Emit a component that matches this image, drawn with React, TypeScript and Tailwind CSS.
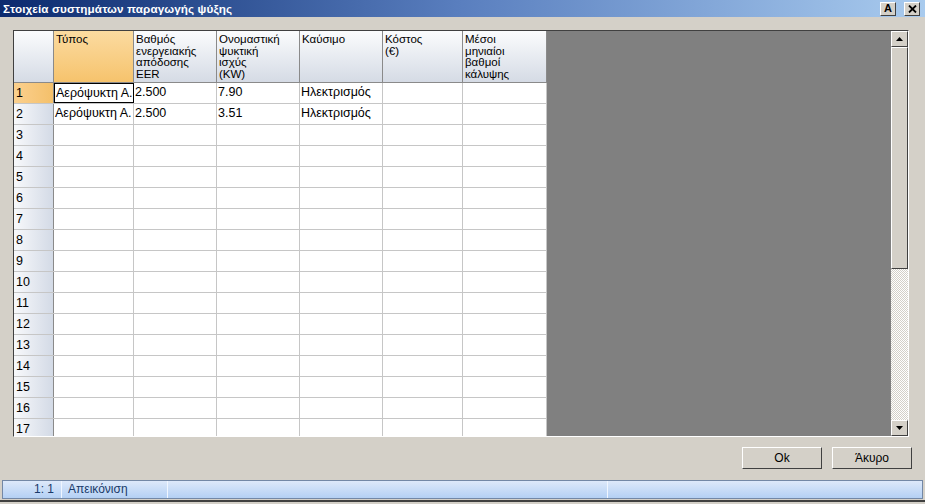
import React from "react";

const cols = [
  { w: 80, label: ["Τύπος"], sel: true },
  { w: 83, label: ["Βαθμός", "ενεργειακής", "απόδοσης", "EER"] },
  { w: 83, label: ["Ονομαστική", "ψυκτική", "ισχύς", "(KW)"] },
  { w: 83, label: ["Καύσιμο"] },
  { w: 80, label: ["Κόστος", "(€)"] },
  { w: 84, label: ["Μέσοι", "μηνιαίοι", "βαθμοί", "κάλυψης"] },
];

const data: string[][] = [
  ["Αερόψυκτη Α.", "2.500", "7.90", "Ηλεκτρισμός", "", ""],
  ["Αερόψυκτη Α.", "2.500", "3.51", "Ηλεκτρισμός", "", ""],
];

export default function App() {
  const rows = Array.from({ length: 17 }, (_, i) => i + 1);
  return (
    <div
      className="w-[925px] h-[504px] bg-[#d4d0c8] flex flex-col overflow-hidden text-black"
      style={{ fontFamily: '"Liberation Sans", Arial, sans-serif' }}
    >
      {/* Title bar */}
      <div className="h-[17px] flex items-center bg-gradient-to-r from-[#0c2a6e] via-[#5a7fbf] to-[#a9cbee] pl-[3px] pr-[5px]">
        <span className="text-white font-bold text-[11.7px] leading-none flex-1 tracking-[0.1px]">
          Στοιχεία συστημάτων παραγωγής ψύξης
        </span>
        <div className="w-[16px] h-[14px] bg-[#d4d0c8] border border-t-white border-l-white border-r-[#404040] border-b-[#404040] flex items-center justify-center text-[11px] font-bold leading-none mr-[8px]">
          A
        </div>
        <div className="w-[16px] h-[14px] bg-[#d4d0c8] border border-t-white border-l-white border-r-[#404040] border-b-[#404040] flex items-center justify-center">
          <svg width="9" height="8" viewBox="0 0 9 8">
            <path d="M1 0.5 L8 7.5 M8 0.5 L1 7.5" stroke="#000" strokeWidth="1.8" />
          </svg>
        </div>
      </div>

      {/* Grid area */}
      <div className="ml-[13px] mt-[13px] w-[896px] h-[407px] border border-t-[#404040] border-l-[#404040] border-r-[#ffffff] border-b-[#ffffff] flex bg-[#808080]">
        <div className="flex flex-col bg-white h-full overflow-hidden">
          {/* header row */}
          <div className="flex h-[52px] shrink-0 border-b border-[#8a8a8a]">
            <div className="w-[40px] h-full bg-gradient-to-b from-[#fbfcfd] to-[#d5dbe5] border-r border-[#8a8a8a]" />
            {cols.map((c, i) => (
              <div
                key={i}
                style={{ width: c.w }}
                className={
                  "h-full border-r border-[#8a8a8a] pl-[2px] pt-[3px] text-[11.5px] leading-[11.5px] whitespace-nowrap overflow-hidden " +
                  (c.sel
                    ? "bg-gradient-to-b from-[#fbdba0] to-[#f6c36c]"
                    : "bg-gradient-to-b from-[#fbfcfd] to-[#d5dbe5]")
                }
              >
                {c.label.map((l, j) => (
                  <div key={j}>{l}</div>
                ))}
              </div>
            ))}
          </div>
          {rows.map((r) => {
            const d = data[r - 1];
            return (
              <div key={r} className="flex h-[21px] shrink-0 border-b border-[#c6c6c6]">
                <div
                  className={
                    "w-[40px] h-full border-r border-[#8a8a8a] pl-[2px] text-[12.5px] leading-[20px] " +
                    (r === 1
                      ? "bg-gradient-to-r from-[#fbd08e] to-[#f4c06a]"
                      : "bg-gradient-to-r from-[#f8f9fb] to-[#d3dae6]")
                  }
                >
                  {r}
                </div>
                {cols.map((c, i) => (
                  <div
                    key={i}
                    style={{ width: c.w }}
                    className={
                      "h-full text-[12.5px] leading-[19px] whitespace-nowrap overflow-hidden " +
                      (r === 1 && i === 0
                        ? "border border-black pl-[1px]"
                        : "border-r border-[#c6c6c6] pl-[1px]")
                    }
                  >
                    {d ? d[i] : ""}
                  </div>
                ))}
              </div>
            );
          })}
        </div>
        <div className="flex-1" />
        {/* Scrollbar */}
        <div className="w-[17px] h-full flex flex-col bg-[#d4d0c8]">
          <div className="h-[16px] shrink-0 bg-[#d4d0c8] border border-t-white border-l-white border-r-[#404040] border-b-[#404040] flex items-center justify-center">
            <svg width="7" height="4" viewBox="0 0 7 4">
              <path d="M0 4 L3.5 0 L7 4 Z" fill="#000" />
            </svg>
          </div>
          <div className="h-[222px] shrink-0 bg-[#d4d0c8] border border-t-white border-l-white border-r-[#404040] border-b-[#404040]" />
          <div className="flex-1 bg-[repeating-conic-gradient(#ffffff_0_25%,#d4d0c8_0_50%)] bg-[length:2px_2px]" />
          <div className="h-[16px] shrink-0 bg-[#d4d0c8] border border-t-white border-l-white border-r-[#404040] border-b-[#404040] flex items-center justify-center">
            <svg width="7" height="4" viewBox="0 0 7 4">
              <path d="M0 0 L7 0 L3.5 4 Z" fill="#000" />
            </svg>
          </div>
        </div>
      </div>

      {/* Buttons */}
      <div className="flex justify-end gap-[10px] pr-[13px] mt-[10px]">
        <div className="w-[80px] h-[22px] border border-t-white border-l-white border-r-[#404040] border-b-[#404040] flex items-center justify-center text-[12px]">
          Ok
        </div>
        <div className="w-[80px] h-[22px] border border-t-white border-l-white border-r-[#404040] border-b-[#404040] flex items-center justify-center text-[12px]">
          Άκυρο
        </div>
      </div>

      {/* Status bar */}
      <div className="mt-[11px] mx-[2px] h-[19px] border border-[#7388a6] bg-gradient-to-b from-[#dde9fa] to-[#b4d0f4] flex text-[12px] leading-[17px]">
        <div className="w-[59px] text-right pr-[7px] text-[#1a3a6a] border-r border-[#f0f6ff]">1: 1</div>
        <div className="w-[106px] pl-[6px] text-[#1a3a6a] border-r border-[#f0f6ff]">Απεικόνιση</div>
        <div className="w-[440px] border-r border-[#f0f6ff]" />
        <div className="flex-1" />
      </div>
      <div className="mt-[1px] h-[2px] bg-[#404040]" />
    </div>
  );
}
